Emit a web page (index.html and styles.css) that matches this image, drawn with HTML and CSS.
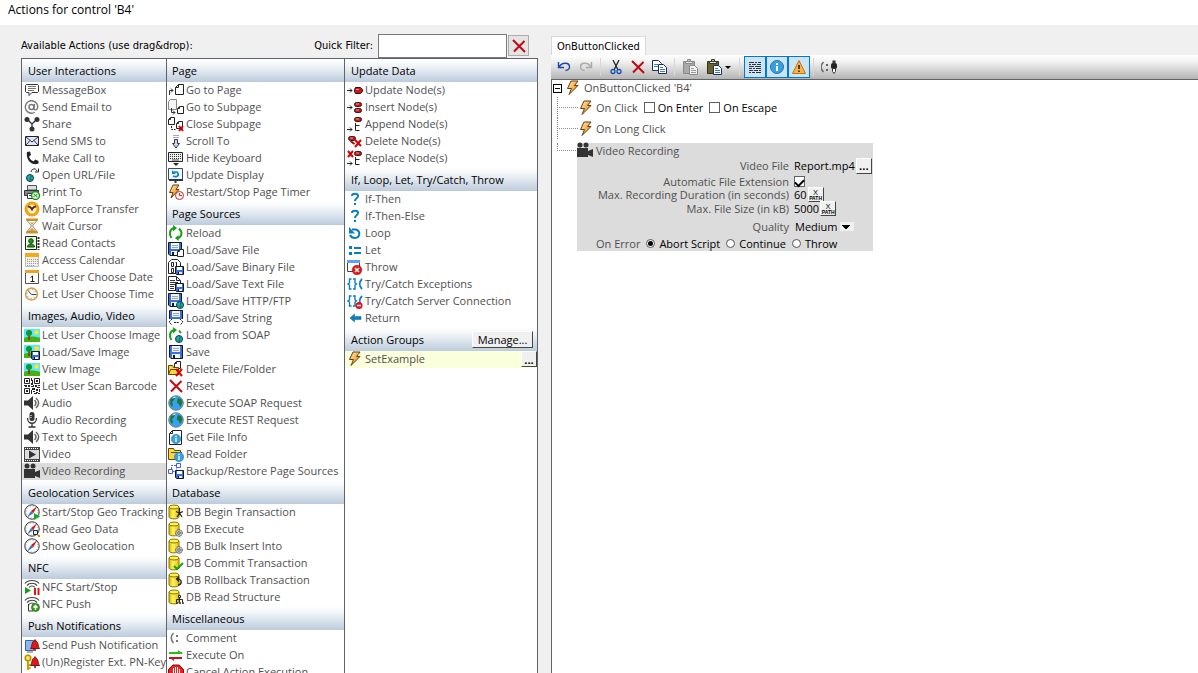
FILE: index.html
```html
<!DOCTYPE html>
<html lang="en">
<head>
<meta charset="utf-8">
<title>Actions for control 'B4'</title>
<link rel="stylesheet" href="styles.css">
</head>
<body>
<svg class="sprite" aria-hidden="true">
<defs>
<linearGradient id="gold" x1="0" y1="0" x2="1" y2="1"><stop offset="0" stop-color="#fff3c0"/><stop offset=".6" stop-color="#f0a840"/><stop offset="1" stop-color="#c87820"/></linearGradient>
<linearGradient id="dbg"><stop offset="0" stop-color="#d8b800"/><stop offset=".4" stop-color="#fff460"/><stop offset="1" stop-color="#e0c000"/></linearGradient>
<g id="g-x"><path d="M1 1l4 5M5 1L1 6" stroke="#d80000" stroke-width="2" fill="none"/></g>
<g id="g-disk"><path d="M.5.5h13v13H2l-1.500-1.500z" fill="#3a70dc" stroke="#101828"/><path d="M3 1h8v6H3z" fill="#f4f6fa"/><path d="M4 3.500h6M4 5.500h6" stroke="#9aa4b8"/><path d="M3 9h8v4H3z" fill="#f0f2f6"/><path d="M4 10h2v3H4z" fill="#101828"/></g>
<g id="g-sdisk"><path d="M.5.5h8v8h-7l-1-1z" fill="#3a70dc" stroke="#101828"/><path d="M2 1h5v3H2z" fill="#fff"/><path d="M3 6h4v2H3z" fill="#e8ebf0"/><path d="M3 6h1v2H3z" fill="#101828"/></g>
<g id="g-globe"><circle cx="4" cy="4" r="3.500" fill="#18c060" stroke="#103860"/><path d="M4 1l2 1-1 2 1 2-2 1-1-2 1-1zM1 3l1 2v1L1 5z" fill="#2060d0"/></g>
<g id="g-page"><path d="M3.500.5h5v10h-8v-7z" fill="#fff" stroke="#222"/><path d="M3.500.5v3h-3" fill="none" stroke="#222"/></g>
<g id="g-spage"><path d="M2.500.5h4v7h-6v-5z" fill="#fff" stroke="#222"/><path d="M2.500 1v1.500H1" fill="none" stroke="#222"/></g>
<g id="g-node"><rect x=".5" y=".5" width="7" height="4" rx="2" fill="#c81818" stroke="#301010"/><path d="M2 2h3" stroke="#ff9090"/></g>
<g id="g-arr"><path d="M0 3.500h5M3 1.500l2 2-2 2" fill="none" stroke="#222"/></g>
<g id="g-db"><path d="M1 3v10c0 2.500 10 2.500 10 0V3" fill="url(#dbg)" stroke="#8a7600"/><ellipse cx="6" cy="3" rx="5" ry="2" fill="#ffef50" stroke="#8a7600"/></g>
<g id="g-gear"><circle cx="4" cy="4" r="3.300" fill="#ccc" stroke="#444" stroke-dasharray="1.500 .6"/><circle cx="4" cy="4" r="1.300" fill="#fff" stroke="#555"/></g>
<g id="g-comp"><circle cx="8" cy="8" r="7.200" fill="#fff" stroke="#333"/><circle cx="8" cy="8" r="6" fill="none" stroke="#999" stroke-dasharray="1 2.140"/><path d="M13 2.500L9.300 9.300 7 7z" fill="#d01818"/><path d="M3 13.500L7 7l2.300 2.300z" fill="#3878c8"/></g>
<g id="g-bell"><path d="M.5 9.500C2 8 1.500 2 5 1.500 8.500 2 8 8 9.500 9.500z" fill="#e01818" stroke="#801010"/><path d="M4 11h2M4.500 1h1" stroke="#601010" stroke-width="1.500"/></g>
<g id="g-nfc"><path d="M1 4.500C4 .5 12 .5 15 4.500M3 6.500c2.500-3 7.500-3 10 0M5 8.500c1.500-2 4.500-2 6 0" fill="none" stroke="#444" stroke-width="1.200"/></g>
<g id="g-scene"><path d="M0 0h16v13H0z" fill="#58e8ff"/><circle cx="12.500" cy="3.500" r="2.300" fill="#ffe820"/><path d="M0 9c5-2 11-2 16 0v4H0z" fill="#48b010"/><path d="M5 5v6" stroke="#902818" stroke-width="1.500"/><circle cx="5" cy="4" r="3" fill="#109830"/></g>
<g id="g-earth"><circle cx="8" cy="8" r="7.300" fill="#38a0ec" stroke="#708898"/><path d="M2.500 4L5 2l2 1-1 2-2 2 1 3-1 2-2-3zM10 3l3 1 1.500 3-1 3-1.500 2-1-3-2-1 0-2z" fill="#1c7838"/><path d="M4.500 3l3-1" stroke="#d8f0ff"/></g>
<g id="g-info"><circle cx="5" cy="5" r="4.700" fill="#38a0dc" stroke="#2080b8" stroke-width=".6"/><path d="M5 4v4M5 1.800v1.400" stroke="#fff" stroke-width="1.400"/></g>
<g id="g-brace"><path d="M4.500 3H2.500v4L1 8l1.500 1v4h2M6 3h2v4l1.500 1L8 9v4H6" fill="none" stroke="#0a7cc0" stroke-width="1.400"/><path d="M15 3c-3 3-3 7 0 10" fill="none" stroke="#0a7cc0" stroke-width="1.800"/></g>
<g id="g-stop"><circle cx="5" cy="5" r="4.800" fill="#e01818" stroke="#a00000" stroke-width=".5"/></g>
<g id="g-clip"><path d="M1.500 2.500h11v12h-11z"/><path d="M3.500 2.500h7v2h-7z" fill="#e8e8e8"/><path d="M5.500.5h3v2h-3z" fill="#ccc"/></g>
</defs>
<symbol id="msg"><path d="M2.500 2.500h11l1 1v6l-1 1H8l-3 3v-3H2.500l-1-1v-6z" fill="#fff" stroke="#333"/><path d="M4 4.500h8M4 6.500h8M4 8.500h6" stroke="#777"/></symbol>
<symbol id="at"><circle cx="7.500" cy="8" r="6.200" fill="none" stroke="#777" stroke-width="1.400" stroke-dasharray="33 6" transform="rotate(58 7.500 8)"/><circle cx="7.500" cy="8" r="2.500" fill="none" stroke="#777" stroke-width="1.500"/><path d="M10.500 5L10 10c1 1.500 3 1 3.500-1" fill="none" stroke="#777" stroke-width="1.300"/></symbol>
<symbol id="share"><path d="M3 3l5 5 5-5M8 8v5" fill="none" stroke="#333" stroke-width="1.300"/><circle cx="3" cy="3.500" r="2.500" fill="#333"/><circle cx="13" cy="3.500" r="2.500" fill="#333"/><circle cx="8" cy="13" r="2.500" fill="#333"/></symbol>
<symbol id="sms"><path d="M1.500 3.500h13v9h-13z" fill="#dde6f8" stroke="#222"/><path d="M2 4l6 5 6-5M2 12l4-4.500M14 12l-4-4.500" fill="none" stroke="#334"/></symbol>
<symbol id="call"><path d="M3 2l3-.5L7 5 5 6.500C5.500 9 8 11 9.500 11.300l2-1.800 3 1.500v2.500c-6 3-13-3-11.500-11.500z" fill="#222"/></symbol>
<symbol id="url"><use href="#g-globe" x="2" y="7"/><path d="M7 5c1-4 5-4 6-1M14.500 1.500V5H11" fill="none" stroke="#222"/></symbol>
<symbol id="print"><path d="M3.500 1.500h9V6h-9z" fill="#dde" stroke="#555"/><path d="M.5 6.500h14v5H.5z" fill="#888" stroke="#333"/><path d="M3.500 9.500h7v5h-7z" fill="#fff" stroke="#333"/><path d="M5 11.500h4" stroke="#444"/><circle cx="11.500" cy="11.500" r="4" fill="#d8f0d0" stroke="#189018" stroke-width="1.300"/><path d="M9.500 10l4 3M9.500 13l1.500-1.500M12 11l1.500-1" stroke="#189018"/></symbol>
<symbol id="mapf"><circle cx="8" cy="8" r="6" fill="#fff0c8" stroke="#f4a010" stroke-width="3"/><path d="M4 5.500c2.500 0 3 1.500 4 2.500 1-1 1.500-2.500 4-2.500M8 8v1.500" fill="none" stroke="#503000" stroke-width="2"/></symbol>
<symbol id="wait"><path d="M3 2.500h10L8.500 8l4.500 5.500H3L7.500 8z" fill="#fff8d8" stroke="#7890a8"/><path d="M4.500 13L8 9.500l3.500 3.500zM6 4.500h4L8 7z" fill="#f0a020"/><path d="M2 1.500h12M2 14.500h12" stroke="#d89018" stroke-width="2"/></symbol>
<symbol id="contact"><path d="M1.500 1.500h11v13h-11z" fill="#e8ffe0" stroke="#222"/><circle cx="7" cy="6" r="2.300" fill="#289028" stroke="#104810"/><path d="M3.500 12c0-4 7-4 7 0z" fill="#289028" stroke="#104810"/><path d="M14.500 2v13" stroke="#333" stroke-width="2" stroke-dasharray="2 1"/></symbol>
<symbol id="cal"><path d="M1.500 1.500h13v13h-13z" fill="#f4f0e8" stroke="#bbb"/><path d="M1 1h14v4H1z" fill="#f8a818"/><path d="M3 7.500h11M3 9.500h11M3 11.500h11M3 13.500h8" stroke="#999" stroke-dasharray="1 1"/></symbol>
<symbol id="date"><path d="M1.500 1.500h13v13h-13z" fill="#fff" stroke="#555"/><path d="M1 1h14v3H1z" fill="#f0a020"/><path d="M6.500 8.500l2-1.500v5M6.500 12.500h4" fill="none" stroke="#222"/></symbol>
<symbol id="time"><circle cx="7.500" cy="8" r="6" fill="#f0f6fa" stroke="#d8a040" stroke-width="1.500"/><path d="M4 4.500l3.500 4h5" fill="none" stroke="#445"/><circle cx="7.500" cy="8" r="4.500" fill="none" stroke="#789" stroke-dasharray="1 2.500"/></symbol>
<symbol id="scene"><use href="#g-scene" y="2"/></symbol>
<symbol id="scenesave"><use href="#g-scene" y="1"/><use href="#g-sdisk" x="7" y="7"/></symbol>
<symbol id="qr"><path d="M.5.5h5v5h-5zM10.500.5h5v5h-5zM.5 10.500h5v5h-5z" fill="#fff" stroke="#222"/><path d="M2 2h2v2H2zM12 2h2v2h-2zM2 12h2v2H2zM7 0h1v3H7zM8 2h1v3H8zM7 5h2v2H7zM0 7h3v1H0zM4 7h2v2H4zM1 8h2v1H1zM7 8h3v1H7zM11 7h2v2h-2zM14 7h2v1h-2zM13 9h3v1h-3zM8 10h3v2H8zM7 12h1v4H7zM12 11h2v2h-2zM15 11h1v3h-1zM9 13h2v1H9zM10 15h3v1h-3zM12 14h2v1h-2zM14 15h2v1h-2zM9 7h1v1H9z" fill="#222"/></symbol>
<symbol id="audio"><path d="M0 5.500h4L9 1v14l-5-4.500H0z" fill="#333"/><path d="M10.500 5c2 2 2 4 0 6M12 3c3.500 3 3.500 7 0 10" fill="none" stroke="#666" stroke-width="1.500"/></symbol>
<symbol id="mic"><rect x="5.500" y="0" width="5" height="9" rx="2.500" fill="#333"/><path d="M6 3.500h2M6 5.500h2" stroke="#aaa"/><path d="M3.500 6c0 7 9 7 9 0M8 11v4M4.500 15h7" fill="none" stroke="#333" stroke-width="1.300"/></symbol>
<symbol id="video"><path d="M0 1h16v15H0z" fill="#444"/><path d="M1 4h14v9H1z" fill="#ddd"/><path d="M5 4.500l7 4-7 4z" fill="#333"/><path d="M1 2.500h14M1 14.500h14" stroke="#fff" stroke-dasharray="1 1"/></symbol>
<symbol id="cam"><circle cx="3" cy="3" r="2.500" fill="#333"/><circle cx="9" cy="3" r="2.500" fill="#333"/><path d="M0 6h11v3l5-2v8l-5-2v2H0z" fill="#333"/></symbol>
<symbol id="geo"><use href="#g-comp"/></symbol>
<symbol id="geoplay"><use href="#g-comp"/><path d="M10 9l6 3.500-6 3.500z" fill="#10b020"/></symbol>
<symbol id="georead"><use href="#g-comp"/><path d="M9.500 9.500h4v4h-4z" fill="#d8f0ff" stroke="#223"/><path d="M14 14l2 2" stroke="#c08000" stroke-width="2"/></symbol>
<symbol id="nfcplay"><use href="#g-nfc"/><path d="M1 8l6 3.500L1 15z" fill="#10a020"/><path d="M11 9v7M14.500 9v7" stroke="#d81818" stroke-width="2"/></symbol>
<symbol id="nfcpush"><use href="#g-nfc"/><path d="M4.500 8v7H9" fill="none" stroke="#333"/><circle cx="11.500" cy="11.500" r="4" fill="#38a020" stroke="#206010" stroke-width=".7"/><path d="M11.500 14V9.500M9.500 11.500l2-2 2 2" fill="none" stroke="#fff" stroke-width="1.300"/></symbol>
<symbol id="push"><path d="M1.500 3.500h8v10h-8z" fill="#88b8f0" stroke="#3860a0"/><path d="M3 15h6" stroke="#666"/><use href="#g-bell" x="6" y="2"/></symbol>
<symbol id="key"><circle cx="4" cy="4" r="2.800" fill="#ffe850" stroke="#b89000" stroke-width="1.500"/><path d="M4 7v9M4 11h2.500M4 14h2.500" stroke="#c8a000" stroke-width="2"/><use href="#g-bell" x="6" y="2"/></symbol>
<symbol id="gopage"><use href="#g-page" x="7" y="2"/><path d="M1.500 13V8.500H5M3 6.500l2 2-2 2" fill="none" stroke="#333"/></symbol>
<symbol id="gosub"><path d="M2.500.5h6v10h-8v-8z" fill="#f4f4f4" stroke="#888"/><use href="#g-spage" x="9" y="7"/><path d="M3.500 9v4.500H7M5 11.500l2 2-2 2" fill="none" stroke="#333"/></symbol>
<symbol id="closesub"><use href="#g-spage" y="1"/><use href="#g-spage" x="8" y="5"/><path d="M3.500 10v3.500h4" fill="none" stroke="#222" stroke-dasharray="2 1"/><use href="#g-x" x="10" y="9"/></symbol>
<symbol id="scroll"><path d="M5 2.500h6M5 4.500h6" stroke="#aaa"/><path d="M6.500 6.500h3v4h2L8 15l-3.500-4.500h2z" fill="#c8d8f8" stroke="#334"/></symbol>
<symbol id="kbd"><path d="M.5 2.500h14v9H.5z" fill="#eee" stroke="#222"/><path d="M2 4.500h11M2 6.500h11M2 8.500h11" stroke="#333" stroke-dasharray="1 1"/><path d="M4 10h7" stroke="#555"/><path d="M5 13h6l-3 3z" fill="#222"/></symbol>
<symbol id="display"><path d="M.5 1.500h14v11H.5z" fill="#eef8ff" stroke="#445"/><path d="M1 13h14M7.500 13v3" stroke="#334" stroke-width="2"/><path d="M6 5h3c3 3 0 6-4 4" fill="none" stroke="#1080c8" stroke-width="1.700"/><path d="M4 3v4h4z" fill="#1080c8"/></symbol>
<symbol id="bolt"><path d="M6 1h7l-3.500 4.500H13L4 14.500l2.500-6H2.500z" fill="url(#gold)" stroke="#6a3c10"/></symbol>
<symbol id="timer"><path d="M5 1h6L8 5.500h3L3 14l2-5.500H1.500z" fill="url(#gold)" stroke="#6a3c10"/><circle cx="11.500" cy="11.500" r="4" fill="#fff" stroke="#d02020"/><path d="M11.500 9v2.500H14" fill="none" stroke="#d02020"/></symbol>
<symbol id="reload"><path d="M3.500 13C.5 9 2 4 6 3M11 3.500c4 4 3 8-1.500 10" fill="none" stroke="#18a018" stroke-width="2"/><path d="M5 0l4 3-4 3.500zM10.500 10v6L7 13z" fill="#18a018"/></symbol>
<symbol id="lsfile"><use href="#g-disk"/><use href="#g-spage" x="9" y="7"/></symbol>
<symbol id="lsbin"><path d="M3.500.5h6l3 3v11H.5V3.500z" fill="#fff" stroke="#222"/><path d="M3.500 3.500h2v4h-2zM3.500 9.500h2v4h-2z" fill="none" stroke="#222"/><path d="M8.500 3v5M7.500 3.500h1" stroke="#222"/><use href="#g-sdisk" x="7" y="7"/></symbol>
<symbol id="lstext"><path d="M.5.5h8l4 4v10H.5z" fill="#fff" stroke="#222"/><path d="M8.500 1v3.500H12" fill="none" stroke="#222"/><path d="M2 4.500h5M2 6.500h8M2 8.500h5M2 10.500h4M2 12.500h4" stroke="#333"/><use href="#g-sdisk" x="7" y="7"/></symbol>
<symbol id="lshttp"><use href="#g-disk"/><use href="#g-globe" x="8" y="8"/></symbol>
<symbol id="lsstr"><use href="#g-disk" x="1"/><path d="M0 9h16v7H0z" fill="#fff"/><path d="M4 9l-3 3 3 3M12 9l3 3-3 3M6 12.500h5" fill="none" stroke="#222" stroke-dasharray="2 .6"/></symbol>
<symbol id="soap"><path d="M3.500 13C.5 9 2 4 6 3M11 3.500l2 2.500" fill="none" stroke="#18a018" stroke-width="2"/><path d="M5 0l4 3-4 3.500z" fill="#18a018"/><use href="#g-globe" x="7" y="8"/></symbol>
<symbol id="save"><use href="#g-disk" x="1" y="1"/></symbol>
<symbol id="delfile"><use href="#g-spage" x="6"/><path d="M.5 4.500h4l1 2h5v7H.5z" fill="#ffd840" stroke="#604800"/><path d="M.5 13.500l2-5h8" fill="none" stroke="#604800"/><path d="M8 8l6 7M14 8l-6 7" stroke="#d80000" stroke-width="2"/></symbol>
<symbol id="reset"><path d="M2 2l12 12M13.500 3L3 13.500" stroke="#c00810" stroke-width="2"/></symbol>
<symbol id="earth"><use href="#g-earth"/></symbol>
<symbol id="fileinfo"><path d="M4.500 1.500h9v14h-12v-11z" fill="#fff" stroke="#222"/><path d="M4.500 2v2.500H2" fill="none" stroke="#222"/><use href="#g-info" x="3" y="5"/></symbol>
<symbol id="readfold"><path d="M.5 2.500h5l1 2h6v9H.5z" fill="#ffd840" stroke="#604800"/><path d="M3 6.500h11" stroke="#604800"/><use href="#g-info" x="6" y="6"/></symbol>
<symbol id="backup"><path d="M.5 6.500h4v4h-4zM8.500.5h4v4h-4z" fill="#fff" stroke="#4060e0"/><path d="M3.500 6V2.500H8M4.500 8.500h4v-3" fill="none" stroke="#4060e0" stroke-dasharray="2 1"/><use href="#g-sdisk" x="7" y="7"/></symbol>
<symbol id="dbbegin"><use href="#g-db"/><path d="M11.500 4v5M8 7.500l3.500 1.500 3.500-1.500M11.500 9L9 13M11.500 9l2.500 4" fill="none" stroke="#222" stroke-width="1.200"/></symbol>
<symbol id="dbexec"><use href="#g-db"/><use href="#g-gear" x="7" y="8"/></symbol>
<symbol id="dbcommit"><use href="#g-db"/><path d="M6 11l3 3 6-6" fill="none" stroke="#18a018" stroke-width="2"/></symbol>
<symbol id="dbroll"><use href="#g-db"/><path d="M9 7h2c4 2 2 6-1 6M11 4.500L8.500 7l2.500 2.500" fill="none" stroke="#222" stroke-width="1.300"/></symbol>
<symbol id="dbread"><use href="#g-db"/><path d="M10.500 6.500h2v2h-2zM8.500 13.500h1v1h-1zM11.500 13.500h1v1h-1zM14.500 13.500h1v1h-1z" fill="#fff" stroke="#222"/><path d="M11.500 9v4M8.500 13v-2.500h6V13" fill="none" stroke="#222"/></symbol>
<symbol id="comment"><path d="M5.500 3c-3 3-3 7 0 10" fill="none" stroke="#777" stroke-width="1.600"/><path d="M8 5h2v2H8zM8 10h2v2H8z" fill="#777"/></symbol>
<symbol id="execon"><path d="M1 5h13v2H1zM10 3l5 4h-5z" fill="#30b818"/><path d="M1 10h13v2H1zM6 14l-5-4h5z" fill="#c01818"/></symbol>
<symbol id="cancel"><path d="M5 1h6l4.500 4.500v6L11 16H5L.5 11.500v-6z" fill="#e82020" stroke="#a00000"/><path d="M5.500 4v7M7.500 3v7M9.500 3v7M11.500 5v6M6 11h5v3H7z" stroke="#fff"/></symbol>
<symbol id="upd"><use href="#g-arr" y="5"/><path d="M8.500 5.500h5l2 2v2l-2 2h-5l-1-2v-2z" fill="#c81818" stroke="#301010"/><path d="M9 7.500h3" stroke="#ff9090"/></symbol>
<symbol id="ins"><use href="#g-arr" y="5"/><use href="#g-node" x="7" y="3"/><use href="#g-node" x="7" y="9"/></symbol>
<symbol id="app"><use href="#g-arr" y="10"/><use href="#g-node" x="7" y="1"/><path d="M8.500 7v7.500h4M8.500 9.500h4" fill="none" stroke="#222"/></symbol>
<symbol id="del"><use href="#g-node" x="1" y="3"/><path d="M3.500 8l4 3" stroke="#811" stroke-width="2"/><path d="M8 7l6 6M14 7l-6 7" stroke="#d80000" stroke-width="2"/></symbol>
<symbol id="rep"><path d="M1 1l5 6M6 1L1 7" stroke="#d80000" stroke-width="2"/><use href="#g-arr" y="10"/><use href="#g-node" x="7" y="1"/><path d="M8.500 7v7.500h4M8.500 9.500h4" fill="none" stroke="#222"/></symbol>
<symbol id="q"><path d="M5 5c0-3 6-3 6 0 0 2.500-3 2-3 5" fill="none" stroke="#0a7cc0" stroke-width="2"/><path d="M7 12h2v2H7z" fill="#0a7cc0"/></symbol>
<symbol id="loop"><path d="M5 4.500h4c5 2 4 8-1 8.500-2 0-4-1-5-3" fill="none" stroke="#0a7cc0" stroke-width="2"/><path d="M2 2v6.500h6z" fill="#0a7cc0"/></symbol>
<symbol id="let"><path d="M2 4h3v3H2zM2 10h3v3H2zM7 5h7v2H7zM7 10h7v2H7z" fill="#0a7cc0"/></symbol>
<symbol id="throw"><path d="M.5 1.500h12v11H.5z" fill="#fff" stroke="#444"/><path d="M0 1h13v3H0z" fill="#60a0f8"/><use href="#g-stop" x="5" y="6"/><path d="M8 9l4 4M12 9l-4 4" stroke="#fff" stroke-width="1.500"/></symbol>
<symbol id="try"><use href="#g-brace"/></symbol>
<symbol id="trys"><use href="#g-brace"/><circle cx="12" cy="12.500" r="3.500" fill="#e01020"/><path d="M10 12.500h4" stroke="#fff" stroke-width="1.500"/></symbol>
<symbol id="ret"><path d="M3 8l4.500-4v2.500H14v3H7.500V12z" fill="#0a7cc0" stroke="#0868a0" stroke-width=".5"/></symbol>
<symbol id="undo"><path d="M2.500 3v5.500H8M3 8C6 3 13.500 3 13.500 8c0 2-2 3.500-4 3.500" fill="none" stroke="#1848a8" stroke-width="1.400"/></symbol>
<symbol id="redo"><path d="M13.500 3v5.500H8M13 8C10 3 2.500 3 2.500 8c0 2 2 3.500 4 3.500" fill="none" stroke="#aaa" stroke-width="1.400"/></symbol>
<symbol id="cut"><path d="M5 1l5 10M11 1L6 11" stroke="#222" stroke-width="1.300"/><circle cx="5" cy="12.500" r="2" fill="none" stroke="#1850b0" stroke-width="1.300"/><circle cx="11" cy="12.500" r="2" fill="none" stroke="#1850b0" stroke-width="1.300"/></symbol>
<symbol id="copy"><path d="M.5 1.500h6l3 3v7h-9z" fill="#fff" stroke="#183060"/><path d="M6.500 5.500h5l3 3v6h-8z" fill="#fff" stroke="#183060"/><path d="M2 5.500h4M2 7.500h4M8 8.500h3M8 10.500h5M8 12.500h5" stroke="#4878c0"/></symbol>
<symbol id="pasteg"><use href="#g-clip" fill="#aaa" stroke="#888"/><path d="M7.500 6.500h5l3 3v6h-8z" fill="#f4f4f4" stroke="#888"/><path d="M9 9.500h3M9 11.500h5M9 13.500h5" stroke="#999"/></symbol>
<symbol id="paste"><use href="#g-clip" fill="#6a6428" stroke="#332"/><path d="M7.500 6.500h5l3 3v6h-8z" fill="#fff" stroke="#183060"/><path d="M9 9.500h3M9 11.500h5M9 13.500h5" stroke="#4878c0"/></symbol>
<symbol id="lines"><path d="M2 3.500h5M8 3.500h2M11 3.500h3M2 5.500h2M5 5.500h4M10 5.500h4M2 7.500h5M8 7.500h6M2 9.500h3M6 9.500h2M9 9.500h5M2 11.500h4M7 11.500h4M12 11.500h2M2 13.500h2M5 13.500h3M9 13.500h5" stroke="#333"/></symbol>
<symbol id="info"><circle cx="8" cy="8" r="6.500" fill="#38a0dc" stroke="#2078b0"/><path d="M8 7v5M8 4v2" stroke="#fff" stroke-width="2"/></symbol>
<symbol id="warn"><path d="M8 1.500l6.500 13h-13z" fill="#ffb040" stroke="#b87818"/><path d="M8 6v4M8 11.500V13" stroke="#222" stroke-width="1.600"/></symbol>
<symbol id="cmt"><path d="M2.500 3c-3 3-3 7 0 10" fill="none" stroke="#666" stroke-width="1.500"/><path d="M5 5h2v2H5zM5 10h2v2H5z" fill="#666"/><rect x="10" y="4" width="6" height="6" rx="2" fill="#222"/><path d="M11.500 1.500h3V5h-3z" fill="#333"/><path d="M11.500 9.500h3v3l-1.500 2-1.500-2z" fill="#fff" stroke="#333"/></symbol>
</svg>

<header class="titlebar"><h1>Actions for control 'B4'</h1></header>

<main class="dialog">
<section class="available">
<div class="filterbar">
<h2>Available Actions (use drag&amp;drop):</h2>
<label for="filter">Quick Filter:</label>
<input id="filter" class="filter" type="text">
<button class="clear" type="button" aria-label="Clear filter"><svg class="icon"><use href="#reset"/></svg></button>
</div>
<div class="columns">
<div class="column">
<h3 class="group">User Interactions</h3>
<ul>
<li><svg class="icon"><use href="#msg"/></svg>MessageBox</li>
<li><svg class="icon"><use href="#at"/></svg>Send Email to</li>
<li><svg class="icon"><use href="#share"/></svg>Share</li>
<li><svg class="icon"><use href="#sms"/></svg>Send SMS to</li>
<li><svg class="icon"><use href="#call"/></svg>Make Call to</li>
<li><svg class="icon"><use href="#url"/></svg>Open URL/File</li>
<li><svg class="icon"><use href="#print"/></svg>Print To</li>
<li><svg class="icon"><use href="#mapf"/></svg>MapForce Transfer</li>
<li><svg class="icon"><use href="#wait"/></svg>Wait Cursor</li>
<li><svg class="icon"><use href="#contact"/></svg>Read Contacts</li>
<li><svg class="icon"><use href="#cal"/></svg>Access Calendar</li>
<li><svg class="icon"><use href="#date"/></svg>Let User Choose Date</li>
<li><svg class="icon"><use href="#time"/></svg>Let User Choose Time</li>
</ul>
<h3 class="group">Images, Audio, Video</h3>
<ul>
<li><svg class="icon"><use href="#scene"/></svg>Let User Choose Image</li>
<li><svg class="icon"><use href="#scenesave"/></svg>Load/Save Image</li>
<li><svg class="icon"><use href="#scene"/></svg>View Image</li>
<li><svg class="icon"><use href="#qr"/></svg>Let User Scan Barcode</li>
<li><svg class="icon"><use href="#audio"/></svg>Audio</li>
<li><svg class="icon"><use href="#mic"/></svg>Audio Recording</li>
<li><svg class="icon"><use href="#audio"/></svg>Text to Speech</li>
<li><svg class="icon"><use href="#video"/></svg>Video</li>
<li class="selected"><svg class="icon"><use href="#cam"/></svg>Video Recording</li>
</ul>
<h3 class="group">Geolocation Services</h3>
<ul>
<li><svg class="icon"><use href="#geoplay"/></svg>Start/Stop Geo Tracking</li>
<li><svg class="icon"><use href="#georead"/></svg>Read Geo Data</li>
<li><svg class="icon"><use href="#geo"/></svg>Show Geolocation</li>
</ul>
<h3 class="group">NFC</h3>
<ul>
<li><svg class="icon"><use href="#nfcplay"/></svg>NFC Start/Stop</li>
<li><svg class="icon"><use href="#nfcpush"/></svg>NFC Push</li>
</ul>
<h3 class="group">Push Notifications</h3>
<ul>
<li><svg class="icon"><use href="#push"/></svg>Send Push Notification</li>
<li><svg class="icon"><use href="#key"/></svg>(Un)Register Ext. PN-Key</li>
</ul>
</div>
<div class="column">
<h3 class="group">Page</h3>
<ul>
<li><svg class="icon"><use href="#gopage"/></svg>Go to Page</li>
<li><svg class="icon"><use href="#gosub"/></svg>Go to Subpage</li>
<li><svg class="icon"><use href="#closesub"/></svg>Close Subpage</li>
<li><svg class="icon"><use href="#scroll"/></svg>Scroll To</li>
<li><svg class="icon"><use href="#kbd"/></svg>Hide Keyboard</li>
<li><svg class="icon"><use href="#display"/></svg>Update Display</li>
<li><svg class="icon"><use href="#timer"/></svg>Restart/Stop Page Timer</li>
</ul>
<h3 class="group">Page Sources</h3>
<ul>
<li><svg class="icon"><use href="#reload"/></svg>Reload</li>
<li><svg class="icon"><use href="#lsfile"/></svg>Load/Save File</li>
<li><svg class="icon"><use href="#lsbin"/></svg>Load/Save Binary File</li>
<li><svg class="icon"><use href="#lstext"/></svg>Load/Save Text File</li>
<li><svg class="icon"><use href="#lshttp"/></svg>Load/Save HTTP/FTP</li>
<li><svg class="icon"><use href="#lsstr"/></svg>Load/Save String</li>
<li><svg class="icon"><use href="#soap"/></svg>Load from SOAP</li>
<li><svg class="icon"><use href="#save"/></svg>Save</li>
<li><svg class="icon"><use href="#delfile"/></svg>Delete File/Folder</li>
<li><svg class="icon"><use href="#reset"/></svg>Reset</li>
<li><svg class="icon"><use href="#earth"/></svg>Execute SOAP Request</li>
<li><svg class="icon"><use href="#earth"/></svg>Execute REST Request</li>
<li><svg class="icon"><use href="#fileinfo"/></svg>Get File Info</li>
<li><svg class="icon"><use href="#readfold"/></svg>Read Folder</li>
<li><svg class="icon"><use href="#backup"/></svg>Backup/Restore Page Sources</li>
</ul>
<h3 class="group">Database</h3>
<ul>
<li><svg class="icon"><use href="#dbbegin"/></svg>DB Begin Transaction</li>
<li><svg class="icon"><use href="#dbexec"/></svg>DB Execute</li>
<li><svg class="icon"><use href="#dbexec"/></svg>DB Bulk Insert Into</li>
<li><svg class="icon"><use href="#dbcommit"/></svg>DB Commit Transaction</li>
<li><svg class="icon"><use href="#dbroll"/></svg>DB Rollback Transaction</li>
<li><svg class="icon"><use href="#dbread"/></svg>DB Read Structure</li>
</ul>
<h3 class="group">Miscellaneous</h3>
<ul>
<li><svg class="icon"><use href="#comment"/></svg>Comment</li>
<li><svg class="icon"><use href="#execon"/></svg>Execute On</li>
<li><svg class="icon"><use href="#cancel"/></svg>Cancel Action Execution</li>
</ul>
</div>
<div class="column">
<h3 class="group">Update Data</h3>
<ul>
<li><svg class="icon"><use href="#upd"/></svg>Update Node(s)</li>
<li><svg class="icon"><use href="#ins"/></svg>Insert Node(s)</li>
<li><svg class="icon"><use href="#app"/></svg>Append Node(s)</li>
<li><svg class="icon"><use href="#del"/></svg>Delete Node(s)</li>
<li><svg class="icon"><use href="#rep"/></svg>Replace Node(s)</li>
</ul>
<h3 class="group">If, Loop, Let, Try/Catch, Throw</h3>
<ul>
<li><svg class="icon"><use href="#q"/></svg>If-Then</li>
<li><svg class="icon"><use href="#q"/></svg>If-Then-Else</li>
<li><svg class="icon"><use href="#loop"/></svg>Loop</li>
<li><svg class="icon"><use href="#let"/></svg>Let</li>
<li><svg class="icon"><use href="#throw"/></svg>Throw</li>
<li><svg class="icon"><use href="#try"/></svg>Try/Catch Exceptions</li>
<li><svg class="icon"><use href="#trys"/></svg>Try/Catch Server Connection</li>
<li><svg class="icon"><use href="#ret"/></svg>Return</li>
</ul>
<div class="group"><h3>Action Groups</h3><button class="raised manage" type="button">Manage...</button></div>
<ul>
<li class="custom"><svg class="icon"><use href="#bolt"/></svg>SetExample<button class="raised dots" type="button">...</button></li>
</ul>
</div>
</div>
</section>

<section class="editor">
<div role="tablist"><button class="tab" role="tab" aria-selected="true" type="button">OnButtonClicked</button></div>
<div class="toolbar" role="toolbar">
<button type="button" aria-label="Undo"><svg class="icon"><use href="#undo"/></svg></button>
<button type="button" aria-label="Redo"><svg class="icon"><use href="#redo"/></svg></button>
<span class="sep"></span>
<button type="button" aria-label="Cut"><svg class="icon"><use href="#cut"/></svg></button>
<button type="button" aria-label="Delete"><svg class="icon"><use href="#reset"/></svg></button>
<button type="button" aria-label="Copy"><svg class="icon"><use href="#copy"/></svg></button>
<span class="sep"></span>
<button type="button" aria-label="Paste"><svg class="icon"><use href="#pasteg"/></svg></button>
<button class="split" type="button" aria-label="Paste options"><svg class="icon"><use href="#paste"/></svg><span class="caret"></span></button>
<span class="sep"></span>
<button class="on" type="button" aria-label="Show text"><svg class="icon"><use href="#lines"/></svg></button>
<button class="on" type="button" aria-label="Show information"><svg class="icon"><use href="#info"/></svg></button>
<button class="on" type="button" aria-label="Show warnings"><svg class="icon"><use href="#warn"/></svg></button>
<span class="sep"></span>
<button type="button" aria-label="Toggle comment"><svg class="icon"><use href="#cmt"/></svg></button>
</div>
<div class="tree">
<div class="root"><button class="expander" type="button" aria-label="Collapse"></button><svg class="icon"><use href="#bolt"/></svg><span>OnButtonClicked 'B4'</span></div>
<ul class="nodes">
<li><span class="branch"></span><svg class="icon"><use href="#bolt"/></svg><span>On Click</span>
<label class="option"><input type="checkbox">On Enter</label><label class="option"><input type="checkbox">On Escape</label></li>
<li><span class="branch"></span><svg class="icon"><use href="#bolt"/></svg><span>On Long Click</span></li>
<li class="last"><span class="branch"></span>
<form class="action">
<div class="caption"><svg class="icon"><use href="#cam"/></svg>Video Recording</div>
<div class="field tall"><label for="file">Video File</label><span class="value"><output id="file">Report.mp4</output><button class="raised dots" type="button">...</button></span></div>
<div class="field"><label for="ext">Automatic File Extension</label><span class="value"><input id="ext" type="checkbox" checked></span></div>
<div class="field"><label for="dur">Max. Recording Duration (in seconds)</label><span class="value"><output id="dur">60</output><button class="raised xpath" type="button"><span>X</span><span>PATH</span></button></span></div>
<div class="field tall"><label for="size">Max. File Size (in kB)</label><span class="value"><output id="size">5000</output><button class="raised xpath" type="button"><span>X</span><span>PATH</span></button></span></div>
<div class="field tallest"><label for="quality">Quality</label><span class="value"><select id="quality"><option>Medium</option></select></span></div>
<div class="errors"><span>On Error</span><label><input type="radio" name="err" checked>Abort Script</label><label><input type="radio" name="err">Continue</label><label><input type="radio" name="err">Throw</label></div>
</form></li>
</ul>
</div>
</section>
</main>
</body>
</html>
```

FILE: styles.css
```css
* { box-sizing: border-box; }
body {
  margin: 0;
  height: 100vh;
  display: flex;
  flex-direction: column;
  overflow: hidden;
  background: #f0f0f0;
  color: #505050;
  font: 11px/15px "Open Sans", "Noto Sans", sans-serif;
}
h1, h2, h3, ul { margin: 0; padding: 0; font: inherit; }
ul { list-style: none; }
button, input, select { font: inherit; color: #000; margin: 0; }
.sprite { position: absolute; width: 0; height: 0; }
.icon { width: 16px; height: 16px; flex: none; display: block; }

.titlebar { background: #fff; padding: 0 8px 5px; flex: none; }
.titlebar h1 { font-size: 12px; line-height: 20px; color: #000; }

.dialog { flex: 1; min-height: 0; display: flex; gap: 13px; padding: 8px 0 0 21px; }
.available { flex: 0 0 517px; display: flex; flex-direction: column; min-height: 0; }
.filterbar { display: flex; align-items: center; gap: 1px; height: 25px; padding-right: 9px; color: #000; flex: none; }
.filterbar h2 { flex: 1; }
.filterbar h2, .filterbar label, .tab { font-family: "DejaVu Sans Condensed", "DejaVu Sans", sans-serif; }
.filterbar label { margin-right: 4px; }
.filter { width: 129px; height: 24px; border: 1px solid #7a7a7a; background: #fff; }
.clear { width: 21px; height: 21px; padding: 2px; background: #e4e4e4; border: 1px solid #adadad; }

.columns { flex: 1; min-height: 0; display: grid; grid-template-columns: 144px 178px 1fr; background: #fff; border: 1px solid #606468; border-bottom: 0; }
.column { min-width: 0; overflow: hidden; white-space: nowrap; }
.column + .column { border-left: 1px solid #606468; }
.column li { display: flex; align-items: flex-start; gap: 2px; height: 17px; padding-left: 2px; }
.column + .column li { padding-left: 1px; }
.column + .column + .column li { padding-left: 2px; }
.group {
  display: flex;
  align-items: center;
  justify-content: space-between;
  height: 24px;
  padding: 0 4px 0 6px;
  color: #000;
  background: linear-gradient(#fff, #f4f7fa 25%, #bccbdc);
}
.column + .column .group { padding-left: 5px; }
.column + .column + .column .group { padding-left: 6px; }
.column > .group:first-child { height: 23px; }
.selected { background: #dcdcdc; }
.custom { background: #faffdc; }
.custom button { margin-left: auto; }

.raised {
  padding: 0;
  background: #f0f0f0;
  border: 1px solid;
  border-color: #fff #444 #444 #fff;
  line-height: 13px;
}
.manage { width: 61px; height: 17px; }
.dots { width: 16px; height: 16px; font-weight: bold; line-height: 9px; }

.editor { flex: 1; min-width: 0; display: flex; flex-direction: column; padding-top: 3px; }
.tab { display: block; height: 19px; padding: 0 5px; color: #000; background: #fff; border: 1px solid #d9d9d9; border-bottom: 0; }
.toolbar { display: flex; align-items: center; height: 24px; padding-left: 2px; flex: none; background: linear-gradient(#fff, #f0f0f0 30%, #b4b4b4); }
.toolbar button { display: flex; align-items: center; justify-content: center; width: 22px; height: 22px; padding: 0; background: none; border: 0; }
.toolbar .split { width: 35px; gap: 3px; }
.toolbar .on { background: #cce4f7; border: 1px solid #0078d7; }
.sep { width: 1px; height: 18px; margin: 0 4px 0 3px; background: #d8d8d8; }
.caret { border: 3px solid transparent; border-top-color: #000; border-bottom: 0; }

.tree { flex: 1; background: #fff; border: 1px solid #606468; border-width: 1px 0 0 1px; white-space: nowrap; }
.root { display: flex; align-items: flex-start; height: 17px; gap: 3px; padding-left: 1px; }
.expander { align-self: center; width: 9px; height: 9px; padding: 0; border: 1px solid #000; background: linear-gradient(#000, #000) center / 5px 1px no-repeat #fff; }
.nodes li { display: flex; align-items: center; height: 21px; padding-left: 5px; }
.branch { align-self: stretch; width: 21px; border-left: 1px dotted #808080; background: repeating-linear-gradient(90deg, transparent 0 1px, #909090 1px 2px) center / 100% 1px no-repeat; }
.nodes .icon { margin-right: 2px; }
.option { display: flex; align-items: center; gap: 3px; margin-left: 6px; color: #000; }
input[type="checkbox"] { appearance: none; width: 11px; height: 11px; border: 1px solid #606060; background: #fff; display: grid; place-content: center; }
input[type="checkbox"]:checked::before { content: ""; width: 7px; height: 4px; border: solid #000; border-width: 0 0 2px 2px; rotate: -45deg; }
.nodes .last { height: auto; align-items: flex-start; padding-top: 4px; }
.last .branch { align-self: flex-start; height: 8px; width: 20px; background-position: bottom; }

.action { width: 296px; margin: 0; background: #dcdcdc; }
.caption { display: flex; align-items: center; height: 14px; gap: 1px; }
.field { display: grid; grid-template-columns: 212px 1fr; gap: 5px; align-items: center; height: 13px; }
.field label { text-align: right; }
.tall { height: 17px; }
.tallest { height: 19px; }
.value { display: flex; align-items: center; gap: 1px; color: #000; }
.xpath { display: flex; flex-direction: column; align-items: center; justify-content: center; width: 16px; height: 15px; font: 8px/8px "Open Sans", sans-serif; }
.xpath span + span { font: bold 5px/5px "Liberation Sans", sans-serif; }
.xpath span { flex: none; }
.action select {
  appearance: none; border: 0; padding: 0 16px 0 1px; height: 14px; line-height: 14px;
  background: conic-gradient(from -45deg at 50% 4px, #000 90deg, transparent 0) right 4px center / 8px 4px no-repeat, linear-gradient(#f0f0f0, #f0f0f0) right / 14px 9px no-repeat;
}
.errors { display: flex; align-items: center; height: 15px; padding-left: 19px; gap: 6px; }
.errors label { display: flex; align-items: center; gap: 4px; color: #000; }
input[type="radio"] { appearance: none; width: 9px; height: 9px; border: 1px solid #555; border-radius: 50%; background: #fff; display: grid; place-content: center; }
input[type="radio"]:checked::before { content: ""; width: 5px; height: 5px; border-radius: 50%; background: #000; }
```
